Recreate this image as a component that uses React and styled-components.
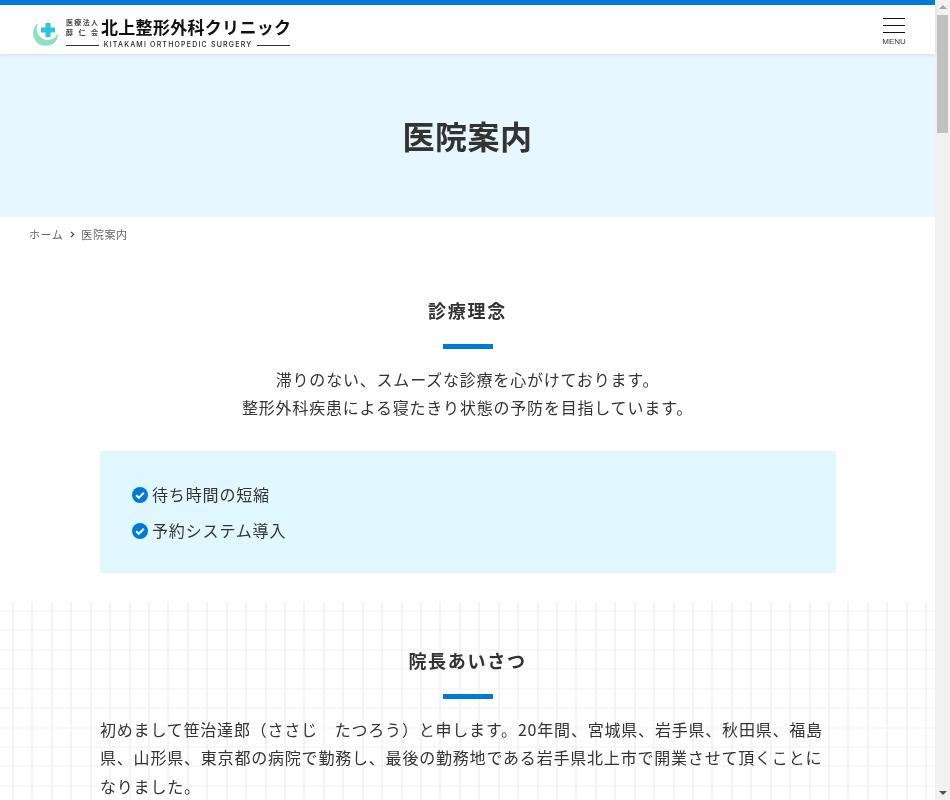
import React from "react";
import styled, { createGlobalStyle } from "styled-components";

const Global = createGlobalStyle`
  html, body { height: 800px; overflow: hidden; }
  body { margin: 0; background: #fff; color: #333; font-family: "Noto Sans CJK JP", "Noto Sans", sans-serif; }
  * { box-sizing: border-box; }
  p, h1, h2, ul { margin: 0; padding: 0; }
`;

const Viewport = styled.div`
  display: flex;
  height: 800px;
  overflow: hidden;
`;
const Page = styled.main`
  flex: 1;
  min-width: 0;
  will-change: transform;
`;
const ScrollTrack = styled.div`
  width: 15px;
  flex: none;
  background: #f1f1f1;
  display: flex;
  flex-direction: column;
  align-items: center;
  padding: 5px 2px;
`;
const ArrowUp = styled.span`
  width: 0;
  height: 0;
  border-left: 4px solid transparent;
  border-right: 4px solid transparent;
  border-bottom: 4px solid #a3a3a3;
`;
const ArrowDown = styled.span`
  width: 0;
  height: 0;
  border-left: 4px solid transparent;
  border-right: 4px solid transparent;
  border-top: 4px solid #505050;
  margin-top: auto;
`;
const Thumb = styled.div`
  width: 11px;
  height: 118px;
  margin-top: 6px;
  background: #c1c1c1;
`;

const Header = styled.header`
  height: 54px;
  border-top: 5px solid #007ad9;
  background: #fff;
  box-shadow: 0 1px 4px rgba(0, 0, 0, 0.1);
  display: flex;
  align-items: center;
  justify-content: space-between;
  padding: 0 30px 0 33px;
  position: relative;
`;
const Logo = styled.div`
  display: flex;
  align-items: center;
  gap: 7px;
  margin-top: 8px;
`;
const LogoText = styled.div`
  display: flex;
  flex-direction: column;
  width: 224px;
`;
const LogoTop = styled.div`
  display: flex;
  align-items: center;
  gap: 3px;
  height: 20px;
`;
const Corp = styled.div`
  width: 32px;
  flex: none;
  font-size: 7px;
  line-height: 10px;
  font-weight: 700;
  color: #444;
  text-align: justify;
  text-align-last: justify;
`;
const Name = styled.div`
  font-size: 17px;
  line-height: 20px;
  font-weight: 700;
  color: #111;
  letter-spacing: 0.3px;
  white-space: nowrap;
`;
const LogoSub = styled.div`
  display: flex;
  align-items: center;
  gap: 5px;
  margin-top: 3px;
  font: 500 7px/10px "Inter", "Liberation Sans", sans-serif;
  letter-spacing: 1.2px;
  color: #222;
  white-space: nowrap;
  &::before, &::after { content: ""; flex: 1; height: 1px; background: #333; }
`;
const Menu = styled.div`
  width: 22px;
  display: flex;
  flex-direction: column;
  align-items: center;
  margin-top: 5px;
`;
const Bar = styled.span`
  display: block;
  width: 22px;
  height: 1px;
  background: #111;
  margin-bottom: 6px;
`;
const MenuLabel = styled.span`
  font: 8px/9px "Liberation Sans", sans-serif;
  color: #333;
  margin-top: -2px;
`;
const Hero = styled.div`
  height: 163px;
  background: #e6f7ff;
  display: flex;
  align-items: center;
  justify-content: center;
`;
const HeroTitle = styled.h1`
  font-size: 32px;
  font-weight: 700;
  line-height: 1.4;
  letter-spacing: 0.5px;
  color: #333;
`;
const Crumbs = styled.nav`
  display: flex;
  align-items: center;
  gap: 6.5px;
  padding: 8px 29px 0;
  font-size: 11px;
  line-height: 18px;
  letter-spacing: 0.55px;
  color: #666;
`;
const Section = styled.section`
  padding-top: 53px;
`;
const Heading = styled.h2`
  font-size: 18px;
  font-weight: 700;
  line-height: 28px;
  letter-spacing: 1.7px;
  text-align: center;
  color: #333;
  &::after {
    content: "";
    display: block;
    width: 50px;
    height: 5px;
    background: #007ad9;
    margin: 20px auto 0;
  }
`;
const Lead = styled.p`
  margin-top: 16px;
  text-align: center;
  font-size: 16px;
  line-height: 28px;
  letter-spacing: 0.8px;
`;
const CheckBox = styled.ul`
  list-style: none;
  margin: 30px 99px 0 100px;
  padding: 25px 32px 25px;
  background: #e0f7ff;
  display: flex;
  flex-direction: column;
`;
const CheckItem = styled.li`
  display: flex;
  align-items: center;
  gap: 4px;
  font-size: 16px;
  line-height: 36px;
  letter-spacing: 0.85px;
  svg { margin-top: 2px; }
`;
const Greeting = styled.section`
  margin-top: 29px;
  height: 400px;
  padding-top: 43.6px;
  background-color: #fff;
  background-image:
    repeating-linear-gradient(90deg, transparent 0, transparent 12px, #f4f4f4 12px, #f4f4f4 14px, transparent 14px, transparent 19.43px),
    repeating-linear-gradient(180deg, transparent 0, transparent 8px, #f8f8f8 8px, #f8f8f8 10px, transparent 10px, transparent 19.43px);
`;
const Body = styled.p`
  margin: 16px 99px 0 100px;
  font-size: 16px;
  line-height: 28.8px;
  letter-spacing: 0.8px;
`;

const LogoMark = () => (
  <svg width="26" height="26" viewBox="0 0 26 26">
    <path d="M5.5 2 A12.5 12.5 0 1 0 25 12 A11 11 0 1 1 5.5 2Z" fill="#8fe0c0" />
    <path d="M25 12 A12.5 12.5 0 0 1 15 24.75 A13 13 0 0 0 25 12Z" fill="#0b78c9" />
    <path d="M12.500 2h5v4.500H22v5h-4.500V16h-5v-4.500H8v-5h4.500z" fill="#2bc6e0" />
  </svg>
);

const Check = () => (
  <svg width="16" height="16" viewBox="0 0 16 16">
    <circle cx="8" cy="8" r="8" fill="#007ad9" />
    <path d="M4.2 8.2l2.6 2.6 5-5" fill="none" stroke="#fff" strokeWidth="2" />
  </svg>
);

const Chevron = () => (
  <svg width="5" height="7" viewBox="0 0 5 7">
    <path d="M1 .8l2.600 2.700L1 6.200" fill="none" stroke="#444" strokeWidth="1.2" />
  </svg>
);

export default function App() {
  return (
    <Viewport>
      <Global />
      <Page>
        <Header>
          <Logo>
            <LogoMark />
            <LogoText>
              <LogoTop>
                <Corp>医療法人<br />醇仁会</Corp>
                <Name>北上整形外科クリニック</Name>
              </LogoTop>
              <LogoSub>KITAKAMI ORTHOPEDIC SURGERY</LogoSub>
            </LogoText>
          </Logo>
          <Menu>
            <Bar /><Bar /><Bar />
            <MenuLabel>MENU</MenuLabel>
          </Menu>
        </Header>
        <Hero><HeroTitle>医院案内</HeroTitle></Hero>
        <Crumbs>ホーム <Chevron /> 医院案内</Crumbs>
        <Section>
          <Heading>診療理念</Heading>
          <Lead>滞りのない、スムーズな診療を心がけております。<br />整形外科疾患による寝たきり状態の予防を目指しています。</Lead>
          <CheckBox>
            <CheckItem><Check />待ち時間の短縮</CheckItem>
            <CheckItem><Check />予約システム導入</CheckItem>
          </CheckBox>
        </Section>
        <Greeting>
          <Heading>院長あいさつ</Heading>
          <Body>初めまして笹治達郎（ささじ　たつろう）と申します。20年間、宮城県、岩手県、秋田県、福島県、山形県、東京都の病院で勤務し、最後の勤務地である岩手県北上市で開業させて頂くことになりました。</Body>
        </Greeting>
      </Page>
      <ScrollTrack>
        <ArrowUp />
        <Thumb />
        <ArrowDown />
      </ScrollTrack>
    </Viewport>
  );
}
